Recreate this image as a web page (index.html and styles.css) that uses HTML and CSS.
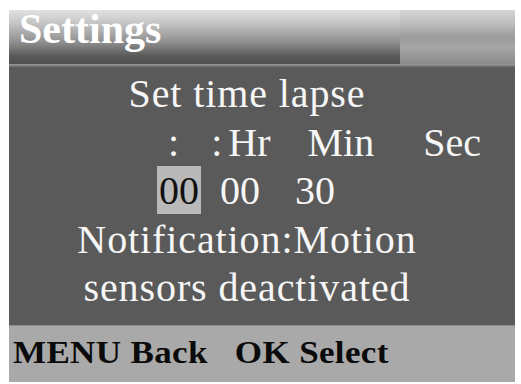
FILE: index.html
```html
<!DOCTYPE html>
<html>
<head>
<meta charset="utf-8">
<link rel="stylesheet" href="styles.css">
</head>
<body>
<div class="screen">
  <div class="titlebar">
    <div class="title-main"><span class="title">Settings</span></div>
    <div class="title-side"></div>
  </div>
  <div class="sep"></div>
  <div class="content">
    <div class="line center">Set time lapse</div>
    <div class="line units"><span class="c1">:</span><span class="c2">:</span><span class="hr">Hr</span><span class="min">Min</span><span class="sec">Sec</span></div>
    <div class="line values"><span class="sel">00</span><span class="v2">00</span><span class="v3">30</span></div>
    <div class="line center">Notification:Motion</div>
    <div class="line center">sensors deactivated</div>
  </div>
  <div class="footer"><span class="keys"><span class="key">MENU Back</span><span class="key ok">OK Select</span></span></div>
</div>
</body>
</html>
```
FILE: styles.css
```css
html, body {
  margin: 0;
  padding: 0;
  background: #ffffff;
}
body {
  width: 521px;
  height: 384px;
  overflow: hidden;
}
.screen {
  margin: 10px 0 0 9px;
  width: 506px;
  height: 372px;
  display: flex;
  flex-direction: column;
  font-family: "Liberation Serif", "Times New Roman", serif;
}
.titlebar {
  height: 54px;
  display: flex;
}
.title-main {
  flex: 1;
  background: linear-gradient(to bottom, #e2e2e2 0%, #c4c4c4 25%, #8e8e8e 60%, #5a5a5a 85%, #4e4e4e 100%);
  padding-left: 10px;
}
.title {
  font-weight: bold;
  font-size: 42px;
  line-height: 38px;
  color: #ffffff;
  display: block;
}
.title-side {
  width: 115px;
  background: linear-gradient(to bottom, #d6d6d6 0%, #bdbdbd 25%, #9c9c9c 50%, #a6a6a6 70%, #8a8a8a 100%);
}
.sep {
  height: 3px;
  background: linear-gradient(to bottom, #9a9a9a, #6a6a6a);
}
.content {
  height: 258px;
  background: #5a5a5a;
  color: #f6f6f6;
  font-size: 40px;
  padding-top: 3px;
  box-sizing: border-box;
}
.line {
  height: 48.5px;
  line-height: 48.5px;
  white-space: nowrap;
}
.center {
  text-align: center;
  padding-right: 30px;
  letter-spacing: 0.9px;
}
.units {
  padding-left: 159px;
}
.c2 { margin-left: 32px; }
.hr { margin-left: 6px; }
.min { margin-left: 37px; }
.sec { margin-left: 49px; }
.values {
  padding-left: 148px;
}
.sel {
  background: #b9b9b9;
  color: #111111;
  padding: 2px 2px 1px 2px;
}
.v2 { margin-left: 19px; }
.v3 { margin-left: 35px; }
.footer {
  height: 57px;
  background: #a9a9a9;
  border-top: 1px solid #8e8e8e;
  box-sizing: border-box;
  color: #0a0a0a;
  font-weight: bold;
  font-size: 31px;
  line-height: 53px;
  padding-left: 4px;
  white-space: nowrap;
}
.keys {
  display: inline-block;
  transform: scaleX(1.13);
  transform-origin: left center;
  letter-spacing: 0.3px;
}
.ok { margin-left: 24px; }
```
